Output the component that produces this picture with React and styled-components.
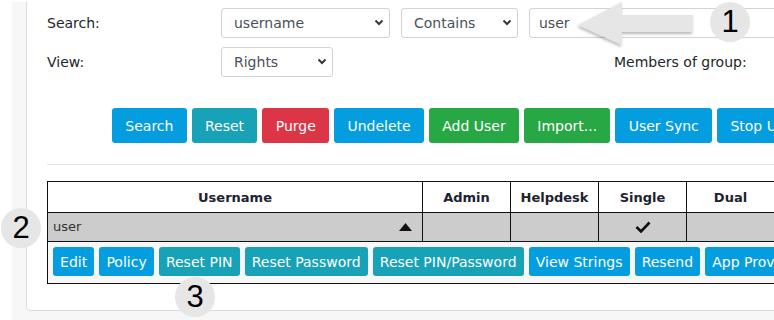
import React from 'react'
import styled, { createGlobalStyle } from 'styled-components'

const GlobalStyle = createGlobalStyle`
  html, body {
    margin: 0;
    padding: 0;
    background: #ffffff;
    overflow: hidden;
  }
  body {
    font-family: "DejaVu Sans", Verdana, sans-serif;
    color: #212529;
  }
`

const searchButtons = [
  { label: 'Search', cl: '#049ddf' },
  { label: 'Reset', cl: '#17a2b8' },
  { label: 'Purge', cl: '#dc3545' },
  { label: 'Undelete', cl: '#049ddf' },
  { label: 'Add User', cl: '#28a745' },
  { label: 'Import...', cl: '#28a745' },
  { label: 'User Sync', cl: '#049ddf' },
  { label: 'Stop User Sync', cl: '#049ddf' },
]

const rowButtons = [
  { label: 'Edit', cl: '#049ddf' },
  { label: 'Policy', cl: '#049ddf' },
  { label: 'Reset PIN', cl: '#17a2b8' },
  { label: 'Reset Password', cl: '#17a2b8' },
  { label: 'Reset PIN/Password', cl: '#17a2b8' },
  { label: 'View Strings', cl: '#049ddf' },
  { label: 'Resend', cl: '#049ddf' },
  { label: 'App Provisioning', cl: '#049ddf' },
]

const columns = [
  { name: 'Username', w: 375 },
  { name: 'Admin', w: 88 },
  { name: 'Helpdesk', w: 88 },
  { name: 'Single', w: 88 },
  { name: 'Dual', w: 88 },
  { name: '', w: 88 },
]

const Chevron = () => (
  <svg width="10" height="7" viewBox="0 0 10 7">
    <path d="M1.5 1.5 L5 5 L8.5 1.5" fill="none" stroke="#343a40" strokeWidth="2" />
  </svg>
)

const Select = ({ w, value }) => (
  <SelectBox w={w}>
    <SelectText>{value}</SelectText>
    <Chevron />
  </SelectBox>
)

const App = () => {
  return (
    <Page>
      <GlobalStyle />
      <Shell>
        <Panel>
          <FormRow>
            <Label>Search:</Label>
            <Select w={169} value="username" />
            <Select w={117} value="Contains" />
            <TextInput defaultValue="user" />
          </FormRow>
          <FormRow top={10}>
            <Label>View:</Label>
            <Select w={112} value="Rights" />
            <SideLabel>Members of group:</SideLabel>
          </FormRow>

          <ButtonRow>
            {searchButtons.map((b) => (
              <Button key={b.label} cl={b.cl}>{b.label}</Button>
            ))}
          </ButtonRow>

          <Divider />

          <Table>
            <colgroup>
              {columns.map((c, i) => (
                <col key={i} style={{ width: c.w }} />
              ))}
            </colgroup>
            <thead>
              <tr>
                {columns.map((c, i) => (
                  <Th key={i}>{c.name}</Th>
                ))}
              </tr>
            </thead>
            <tbody>
              <UserRow>
                <Td>
                  <NameCell>
                    <span>user</span>
                    <svg width="13" height="8" viewBox="0 0 13 8">
                      <polygon points="6.5,0 13,8 0,8" fill="#111" />
                    </svg>
                  </NameCell>
                </Td>
                <Td />
                <Td />
                <Td center>
                  <svg width="16" height="12" viewBox="0 0 16 12">
                    <path d="M1.5 6 L6 10.5 L14.5 1.5" fill="none" stroke="#111" strokeWidth="2.6" />
                  </svg>
                </Td>
                <Td />
                <Td />
              </UserRow>
              <tr>
                <ActionCell colSpan={6}>
                  <ActionRow>
                    {rowButtons.map((b) => (
                      <SmallButton key={b.label} cl={b.cl}>{b.label}</SmallButton>
                    ))}
                  </ActionRow>
                </ActionCell>
              </tr>
            </tbody>
          </Table>
        </Panel>
      </Shell>

      <Callout x={730} y={22}>1</Callout>
      <Callout x={21} y={228}>2</Callout>
      <Callout x={195} y={297}>3</Callout>

      <Arrow width="130" height="52" viewBox="0 0 130 52">
        <defs>
          <filter id="sh" x="-20%" y="-30%" width="140%" height="160%">
            <feDropShadow dx="-1" dy="2" stdDeviation="1.6" floodColor="#000" floodOpacity="0.28" />
          </filter>
        </defs>
        <polygon
          points="6,25 50,2 50,15 121,15 121,32 50,32 50,45"
          fill="#e6e6e6"
          filter="url(#sh)"
        />
      </Arrow>
    </Page>
  )
}

export default App

const Page = styled.div`
  position: relative;
  width: 774px;
  height: 320px;
  padding: 2px 0 0 12px;
  box-sizing: border-box;
  overflow: hidden;
`

const Shell = styled.div`
  background: #f7f7f7;
  padding: 0 0 10px 14px;
  width: 1000px;
`

const Panel = styled.div`
  background: #ffffff;
  border-left: 1px solid #dcdcdc;
  border-bottom: 1px solid #dcdcdc;
  border-bottom-left-radius: 5px;
  padding: 6px 0 26px 20px;
`

const FormRow = styled.div`
  display: flex;
  align-items: center;
  gap: 11px;
  margin-top: ${({ top }) => top || 0}px;
  height: 29px;
`

const Label = styled.div`
  width: 163px;
  font-size: 14px;
  color: #212529;
`

const SideLabel = styled.div`
  margin-left: 270px;
  font-size: 14px;
  color: #212529;
`

const SelectBox = styled.div`
  width: ${({ w }) => w}px;
  height: 30px;
  box-sizing: border-box;
  border: 1px solid #ced4da;
  border-radius: 3px;
  background: #fff;
  display: flex;
  align-items: center;
  justify-content: space-between;
  padding: 0 5px 0 12px;
`

const SelectText = styled.span`
  font-size: 14px;
  color: #495057;
`

const TextInput = styled.input`
  width: 300px;
  height: 30px;
  box-sizing: border-box;
  border: 1px solid #ced4da;
  border-radius: 3px;
  padding: 0 9px;
  font-family: "DejaVu Sans", Verdana, sans-serif;
  font-size: 14px;
  color: #495057;
  outline: none;
`

const ButtonRow = styled.div`
  display: flex;
  gap: 5px;
  margin: 32px 0 0 65px;
  white-space: nowrap;
`

const Button = styled.div`
  height: 35px;
  padding: 0 13.3px;
  display: flex;
  align-items: center;
  border-radius: 3px;
  background-color: ${({ cl }) => cl};
  color: #ffffff;
  font-size: 14px;
`

const Divider = styled.div`
  height: 1px;
  background: #e3e3e3;
  margin-top: 21px;
`

const Table = styled.table`
  margin-top: 16px;
  border-collapse: collapse;
  table-layout: fixed;
  width: 815px;
  border: 1px solid #111;
  font-size: 13px;
`

const Th = styled.th`
  height: 30px;
  padding: 0;
  border: 1px solid #111;
  font-weight: bold;
  color: #1d2230;
  text-align: center;
`

const UserRow = styled.tr`
  background: #cccccc;
`

const Td = styled.td`
  height: 28px;
  padding: 0;
  border: 1px solid #111;
  text-align: ${({ center }) => (center ? 'center' : 'left')};
  vertical-align: middle;
  line-height: 0;
`

const NameCell = styled.div`
  display: flex;
  align-items: center;
  justify-content: space-between;
  padding: 0 10px 0 5px;
  font-size: 13px;
  line-height: 16px;
  color: #333;
`

const ActionCell = styled.td`
  background: #f7f7f7;
  border: 1px solid #111;
  padding: 5px 0 7px 5px;
`

const ActionRow = styled.div`
  display: flex;
  gap: 5px;
  white-space: nowrap;
`

const SmallButton = styled.div`
  height: 29px;
  padding: 0 7.1px;
  display: flex;
  align-items: center;
  border-radius: 3px;
  background-color: ${({ cl }) => cl};
  color: #ffffff;
  font-size: 14px;
`

const Callout = styled.div`
  position: absolute;
  left: ${({ x }) => x - 20}px;
  top: ${({ y }) => y - 20}px;
  width: 40px;
  height: 40px;
  border-radius: 50%;
  background: #e6e6e6;
  display: flex;
  align-items: center;
  justify-content: center;
  font-family: "Liberation Sans", Arial, sans-serif;
  font-size: 31px;
  color: #000;
`

const Arrow = styled.svg`
  position: absolute;
  left: 572px;
  top: 0;
`
